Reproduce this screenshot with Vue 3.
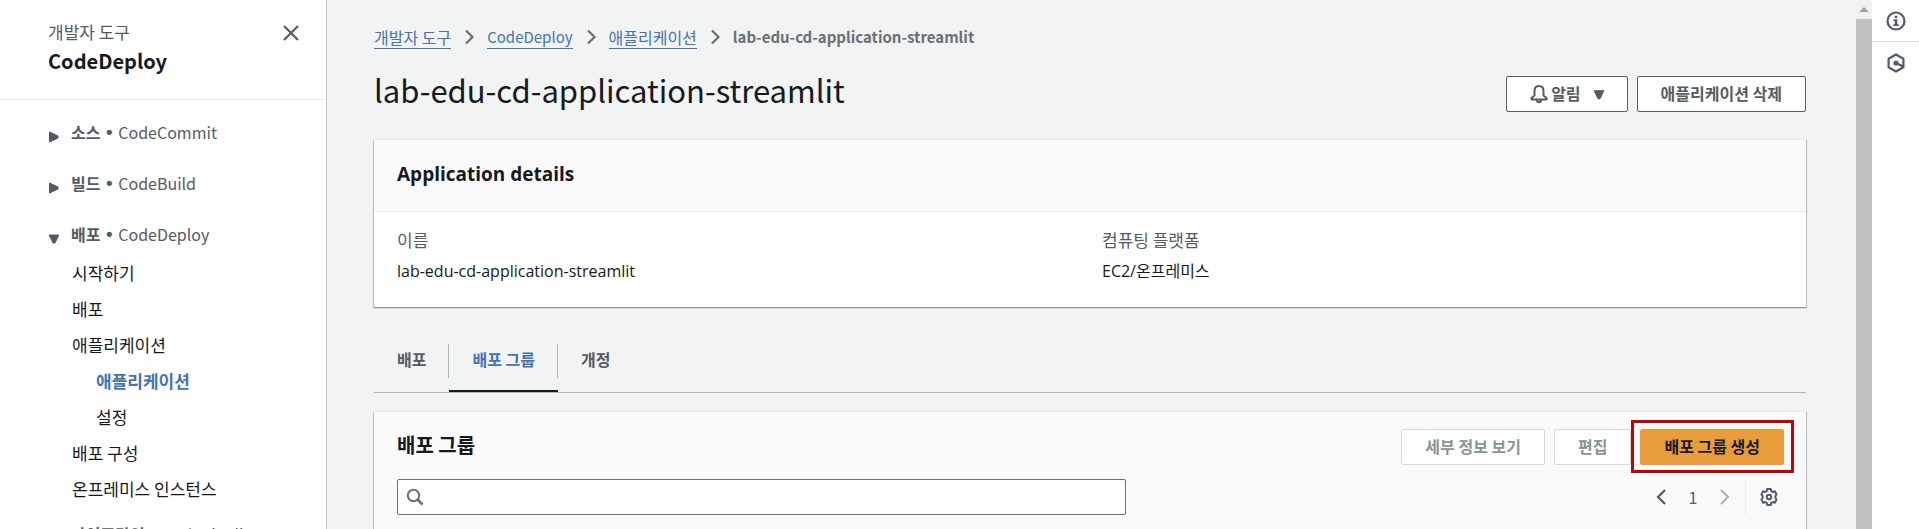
<script setup>
import { ref } from 'vue'

const sections = [
  { title: '소스', service: 'CodeCommit', open: false },
  { title: '빌드', service: 'CodeBuild', open: false },
  {
    title: '배포',
    service: 'CodeDeploy',
    open: true,
    links: [
      { text: '시작하기' },
      { text: '배포' },
      { text: '애플리케이션' },
      { text: '애플리케이션', nested: true, active: true },
      { text: '설정', nested: true },
      { text: '배포 구성' },
      { text: '온프레미스 인스턴스' },
    ],
  },
  { title: '파이프라인', service: 'CodePipeline', open: false },
]

const crumbs = [
  { text: '개발자 도구' },
  { text: 'CodeDeploy', latin: true },
  { text: '애플리케이션' },
]
const appName = 'lab-edu-cd-application-streamlit'
const tabs = ['배포', '배포 그룹', '개정']
const activeTab = ref('배포 그룹')
const query = ref('')
</script>

<template>
  <div class="shell">
    <aside class="sidebar">
      <header class="side-head">
        <div>
          <p class="side-kicker">개발자 도구</p>
          <h2 class="side-title">CodeDeploy</h2>
        </div>
        <button class="icon-btn" type="button" aria-label="탐색 닫기">
          <svg width="18" height="18" viewBox="0 0 18 18"><path d="M2 2l14 14M16 2L2 16" fill="none" stroke="#545b64" stroke-width="2.200" /></svg>
        </button>
      </header>
      <nav class="side-nav">
        <section v-for="s in sections" :key="s.title" class="group">
          <button class="group-head" type="button" :aria-expanded="s.open">
            <svg class="caret" width="12" height="12" viewBox="0 0 12 12">
              <path v-if="s.open" d="M1.200 2h9.600L7 10H5z" fill="#545b64" stroke="#545b64" stroke-linejoin="round" />
              <path v-else d="M1.500 1v10L10 7V5z" fill="#545b64" stroke="#545b64" stroke-linejoin="round" />
            </svg>
            <span><b>{{ s.title }}</b> <span class="dot">•</span> {{ s.service }}</span>
          </button>
          <ul v-if="s.links" class="links">
            <li v-for="(l, i) in s.links" :key="i" :class="{ nested: l.nested }">
              <a href="#" :class="{ active: l.active }">{{ l.text }}</a>
            </li>
          </ul>
        </section>
      </nav>
    </aside>

    <main class="content">
      <nav class="crumbs" aria-label="이동 경로">
        <template v-for="c in crumbs" :key="c.text">
          <a href="#" :class="{ latin: c.latin }">{{ c.text }}</a>
          <svg width="16" height="16" viewBox="0 0 16 16"><path d="M5 1.500L11.500 8 5 14.500" fill="none" stroke="#687078" stroke-width="2.200" /></svg>
        </template>
        <span class="here latin">{{ appName }}</span>
      </nav>

      <div class="title-row">
        <h1>{{ appName }}</h1>
        <div class="actions">
          <button class="btn" type="button">
            <svg class="bell" width="18" height="20" viewBox="0 0 18 20" fill="none" stroke="#545b64" stroke-width="2">
              <path d="M9 2C6 2 4.500 4.200 4.500 7v4.500L1.500 14v1.500h15V14l-3-2.500V7C13.500 4.200 12 2 9 2z" stroke-linejoin="round" />
              <path d="M7 16c0 3 4 3 4 0" />
            </svg>
            알림
            <svg class="drop" width="12" height="12" viewBox="0 0 12 12"><path d="M1.200 1.700h9.600L7 9.800H5z" fill="#545b64" stroke="#545b64" stroke-linejoin="round" /></svg>
          </button>
          <button class="btn" type="button">애플리케이션 삭제</button>
        </div>
      </div>

      <section class="card">
        <header class="card-head"><h2>Application details</h2></header>
        <dl class="details">
          <div><dt>이름</dt><dd>{{ appName }}</dd></div>
          <div><dt>컴퓨팅 플랫폼</dt><dd>EC2/온프레미스</dd></div>
        </dl>
      </section>

      <div class="tabs" role="tablist">
        <button
          v-for="t in tabs"
          :key="t"
          type="button"
          role="tab"
          :class="['tab', { on: t === activeTab }]"
          :aria-selected="t === activeTab"
          @click="activeTab = t"
        ><span>{{ t }}</span></button>
      </div>

      <section class="card groups">
        <div class="groups-head">
          <h2>배포 그룹</h2>
          <div class="actions">
            <button class="btn" type="button" disabled>세부 정보 보기</button>
            <button class="btn" type="button" disabled>편집</button>
            <div class="marked"><button class="btn primary" type="button">배포 그룹 생성</button></div>
          </div>
        </div>
        <div class="filter-row">
          <div class="search">
            <svg width="18" height="18" viewBox="0 0 18 18" fill="none" stroke="#687078" stroke-width="2"><circle cx="7.500" cy="7.500" r="5.700" /><path d="M11.500 11.500l5 5" stroke-width="2.600" /></svg>
            <input v-model="query" type="text" aria-label="배포 그룹 검색" />
          </div>
          <div class="pager">
            <button class="icon-btn" type="button" aria-label="이전 페이지">
              <svg width="18" height="18" viewBox="0 0 18 18"><path d="M13 2L6 9l7 7" fill="none" stroke="#545b64" stroke-width="2.200" /></svg>
            </button>
            <span class="page">1</span>
            <button class="icon-btn" type="button" aria-label="다음 페이지" disabled>
              <svg width="18" height="18" viewBox="0 0 18 18"><path d="M5 2l7 7-7 7" fill="none" stroke="#aab7b8" stroke-width="2.200" /></svg>
            </button>
            <div class="prefs">
              <button class="icon-btn" type="button" aria-label="환경설정">
                <svg width="18" height="18" viewBox="0 0 18 18" fill="none" stroke="#545b64" stroke-width="2">
                  <path d="M7.200 1h3.600l.5 2.200 1.400.8 2.100-.7 1.800 3.100L15.400 8v2l1.200 1.600-1.800 3.100-2.100-.7-1.400.8-.5 2.200H7.200l-.5-2.200-1.400-.8-2.100.7-1.800-3.100L2.600 10V8L1.400 6.400l1.800-3.100 2.100.7 1.400-.8z" stroke-linejoin="round" />
                  <circle cx="9" cy="9" r="2.200" />
                </svg>
              </button>
            </div>
          </div>
        </div>
      </section>
    </main>

    <div class="scrollbar" aria-hidden="true">
      <svg width="16" height="19" viewBox="0 0 16 19"><path d="M3 12l5-5 5 5z" fill="#a3a3a3" /></svg>
      <div class="thumb"></div>
    </div>

    <aside class="rail">
      <button class="rail-btn" type="button" aria-label="정보">
        <svg width="20" height="20" viewBox="0 0 20 20"><circle cx="10" cy="10" r="8.500" fill="none" stroke="#545b64" stroke-width="2.200" /><path d="M8.700 4.800h2.600v2.200H8.700zM7.500 8.200h3.800v5h1.400v1.800H7.300v-1.800h1.400V10H7.500z" fill="#545b64" /></svg>
      </button>
      <button class="rail-btn" type="button" aria-label="도구">
        <svg width="20" height="20" viewBox="0 0 20 20" fill="none" stroke="#545b64" stroke-width="2.200"><path d="M10 1.500l7.400 4.200v8.600L10 18.500l-7.400-4.200V5.700z" stroke-linejoin="round" /><circle cx="10" cy="10" r="2.600" fill="#545b64" stroke="none" /><path d="M10 10l7 3.500" /></svg>
      </button>
    </aside>
  </div>
</template>

<style>
body {
  margin: 0;
  overflow: hidden;
}
</style>

<style scoped>
.shell {
  display: flex;
  height: 100vh;
  overflow: hidden;
  background: #f2f3f3;
  color: #16191f;
  font-family: "Noto Sans CJK KR", "Open Sans", sans-serif;
  font-size: 16px;
  line-height: 24px;
}
h1, h2, p, ul, dl, dd { margin: 0; padding: 0; }
button {
  font: inherit;
  color: inherit;
  background: none;
  border: 0;
  padding: 0;
  cursor: pointer;
}
svg { display: block; flex: none; }

.sidebar {
  flex: 0 0 326px;
  height: 100%;
  overflow: hidden;
  background: #fff;
  border-right: 1px solid #c4c8c8;
}
.side-head {
  display: flex;
  justify-content: space-between;
  align-items: flex-start;
  padding: 19px 26px 22px 48px;
  border-bottom: 1px solid #eaeded;
}
.side-kicker { font-size: 17px; line-height: 26px; color: #545b64; }
.side-title { font-size: 20px; line-height: 32px; font-weight: 700; }
.icon-btn { display: flex; align-items: center; }
.side-head .icon-btn { height: 28px; }
.side-nav { padding: 20px 0 0 48px; }
.group { margin-bottom: 24px; }
.group-head {
  display: flex;
  align-items: flex-start;
  gap: 11px;
  height: 27px;
  color: #545b64;
  white-space: nowrap;
}
.dot { font-family: "DejaVu Sans", sans-serif; font-size: 18px; line-height: 1; }
.caret { margin-top: 11px; }
.links { list-style: none; margin-bottom: -9px; padding: 6px 0 0 24px; }
.links li { height: 36px; line-height: 36px; font-size: 17px; }
.links li.nested { padding-left: 24px; }
.links a { color: #16191f; text-decoration: none; }
.links a.active { color: #4472bc; font-weight: 700; }

.content {
  flex: 1;
  min-width: 0;
  height: 100%;
  overflow: hidden;
  padding: 25px 50px 0 47px;
  box-sizing: border-box;
}
.crumbs { display: flex; align-items: center; gap: 10px; }
.crumbs a {
  color: #4472bc;
  text-decoration: none;
  line-height: 22px;
  border-bottom: 1px solid #4472bc;
}
.crumbs .latin { font-size: 15px; }
.crumbs .here { font-weight: 700; color: #687078; }

.title-row {
  display: flex;
  justify-content: space-between;
  align-items: flex-start;
  padding: 21px 0 29px;
}
h1 { font-size: 31px; line-height: 40px; font-weight: 400; }
.actions { display: flex; gap: 9px; }
.title-row .actions { padding-top: 6px; margin-bottom: -2px; }
.btn {
  display: flex;
  align-items: center;
  height: 36px;
  padding: 0 23px 3px;
  box-sizing: border-box;
  border: 1px solid #545b64;
  border-radius: 2px;
  background: #fff;
  color: #545b64;
  font-weight: 700;
  white-space: nowrap;
}
.btn:disabled { border-color: #d5dbdb; color: #879596; }
.btn.primary { background: #e99c3a; border-color: #e99c3a; color: #16191f; }
.bell { margin-top: 3px; margin-right: 3px; }
.drop { margin: 4px -1px 0 12px; }

.card {
  background: #fff;
  border-top: 1px solid #eaeded;
  box-shadow: 0 1px 1px #8f9296, 1px 1px 1px #c6caca, -1px 1px 1px #c6caca;
}
.card h2 { font-size: 20px; line-height: 28px; font-weight: 700; }
.card-head { padding: 20px 23px 23px; background: #fafafa; border-bottom: 1px solid #eaeded; }
.card .card-head h2 { font-family: "Open Sans", "Noto Sans CJK KR", sans-serif; font-size: 19px; }
.details { display: grid; grid-template-columns: 1fr 1fr; gap: 24px; padding: 15px 23px 24px; }
.details dt { font-size: 17px; line-height: 26px; color: #545b64; }
.details dd { font-family: "Open Sans", "Noto Sans CJK KR", sans-serif; line-height: 24px; padding-top: 6px; }

.tabs {
  display: flex;
  margin-top: 29px;
  border-bottom: 1px solid #aab7b8;
}
.tab {
  padding: 8px 0 12px;
  border-bottom: 2px solid transparent;
  color: #545b64;
  font-weight: 700;
}
.tab span { display: block; padding: 3px 22px 7px 23px; border-right: 1px solid #aab7b8; }
.tab:last-child span { border-right-color: transparent; }
.tab.on { color: #4472bc; border-bottom-color: #16191f; }

.groups { margin-top: 18px; padding: 17px 22px 40px 23px; background: #fafafa; }
.groups-head { display: flex; justify-content: space-between; }
.card.groups h2 { line-height: 32px; }
.marked { position: relative; }
.marked::after {
  content: "";
  position: absolute;
  inset: -9px -10px -8px -9px;
  border: 3px solid #c40000;
  pointer-events: none;
}
.filter-row { display: flex; justify-content: space-between; margin-top: 14px; }
.search {
  display: flex;
  align-items: center;
  gap: 8px;
  flex: 0 1 729px;
  height: 36px;
  padding: 0 8px;
  box-sizing: border-box;
  border: 1px solid #687078;
  border-radius: 2px;
  background: #fff;
}
.search input {
  flex: 1;
  min-width: 0;
  border: 0;
  outline: 0;
  background: none;
  font: inherit;
  color: inherit;
}
.pager { display: flex; align-items: center; color: #545b64; }
.page { width: 46px; text-align: center; }
.prefs { display: flex; align-items: center; height: 36px; margin-left: 11px; padding: 0 6px 0 14px; border-left: 1px solid #eaeded; }

.scrollbar { display: flex; flex-direction: column; flex: 0 0 16px; background: #f1f1f1; }
.thumb { flex: 1; background: #c1c1c1; }
.rail { flex: 0 0 47px; background: #fff; }
.rail-btn { display: flex; width: 100%; height: 42px; box-sizing: border-box; align-items: center; justify-content: center; }
.rail-btn:first-child { border-bottom: 1px solid #d5dbdb; }
</style>
